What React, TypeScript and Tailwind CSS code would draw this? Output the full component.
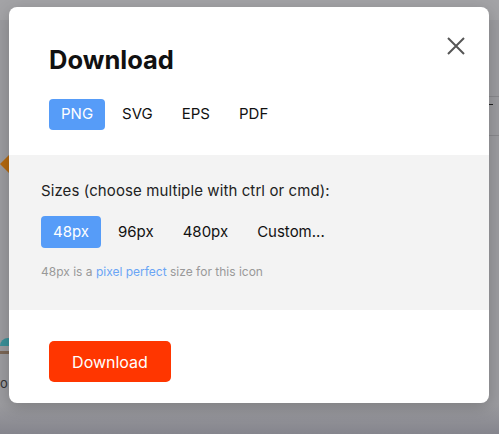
import { useState } from 'react'

const formats = ['PNG', 'SVG', 'EPS', 'PDF']
const sizes = ['48px', '96px', '480px', 'Custom...']

export default function App() {
  const [format, setFormat] = useState('PNG')
  const [size, setSize] = useState('48px')

  return (
    <div
      className="relative h-[434px] w-[499px] overflow-hidden bg-[#9b9b9f] pl-[9px] pt-[7px]"
      style={{ fontFamily: 'Inter, "Noto Sans", sans-serif' }}
    >
      {/* page behind the overlay */}
      <div className="absolute left-0 right-0 top-0 h-[20px] bg-[#a3a3a6]" />
      <div className="absolute left-[489px] right-0 top-[96px] h-px bg-[#88888c]" />
      <div className="absolute left-[489px] right-0 top-[135px] h-px bg-[#88888c]" />
      <div className="absolute left-[489px] top-[104px] h-px w-[4px] bg-[#222]" />
      <div className="absolute left-0 top-[155px] h-0 w-0 border-y-[9px] border-r-[9px] border-y-transparent border-r-[#b3680f]" />
      <div className="absolute left-0 top-[338px] h-[8px] w-[9px] rounded-tl-full bg-[#3a8f98]" />
      <div className="absolute left-0 top-[351px] h-[3px] w-[9px] bg-[#7a6656]" />
      <div className="absolute left-0 top-[374px] text-[13px] text-[#333]">o</div>
      <div className="absolute bottom-0 left-0 right-0 h-[30px] bg-gradient-to-b from-transparent to-[#85858d]" />

      <div className="relative flex h-[396px] w-[480px] flex-col overflow-hidden rounded-[8px] bg-white shadow-[0_4px_16px_rgba(0,0,0,0.2)]">
        <button className="absolute right-[24px] top-[30px] text-[#555]">
          <svg width="18" height="18" viewBox="0 0 18 18" fill="none" stroke="currentColor" strokeWidth="2">
            <path d="M1 1L17 17M17 1L1 17" />
          </svg>
        </button>

        <div className="px-10 pt-[36px]">
          <h1 className="text-[25.5px] font-bold leading-[34px] text-[#111]">Download</h1>
          <div className="mt-[22px] flex gap-[5px]">
            {formats.map((f) => (
              <button
                key={f}
                onClick={() => setFormat(f)}
                className={`h-[31px] rounded-[4px] px-3 text-[15px] ${
                  format === f ? 'bg-[#569cf8] text-white' : 'text-[#111]'
                }`}
              >
                {f}
              </button>
            ))}
          </div>
        </div>

        <div className="mt-[25px] bg-[#f3f3f3] px-8 pb-[30px] pt-[26px]">
          <p className="text-[15px] leading-[20px] tracking-[0.1px] text-[#222]">
            Sizes (choose multiple with ctrl or cmd):
          </p>
          <div className="mt-[15px] flex gap-[5px]">
            {sizes.map((s) => (
              <button
                key={s}
                onClick={() => setSize(s)}
                className={`h-[32px] rounded-[4px] px-3 text-[15px] ${
                  size === s ? 'bg-[#569cf8] text-white' : 'text-[#111]'
                }`}
              >
                {s}
              </button>
            ))}
          </div>
          <p className="mt-[16px] text-[12px] leading-[16px] text-[#999]">
            48px is a <span className="text-[#6aa5f5]">pixel perfect</span> size for this icon
          </p>
        </div>

        <div className="px-10 pt-[31px]">
          <button className="h-[41px] w-[122px] rounded-[5px] bg-[#ff3600] text-[16px] text-white">
            Download
          </button>
        </div>
      </div>
    </div>
  )
}
